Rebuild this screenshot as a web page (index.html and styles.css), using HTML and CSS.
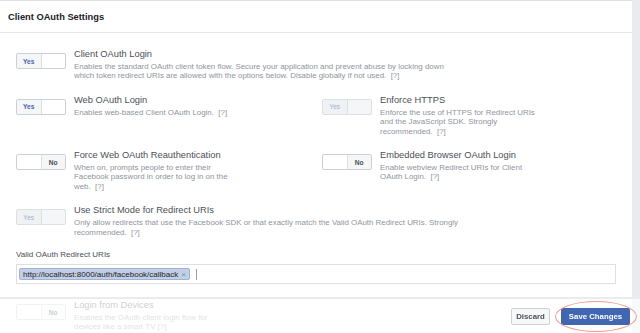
FILE: index.html
```html
<!DOCTYPE html>
<html>
<head>
<meta charset="utf-8">
<link rel="stylesheet" href="styles.css">
</head>
<body>
<div class="card">
  <div class="card-header">Client OAuth Settings</div>
  <div class="card-body">
    <div class="setting">
      <div class="toggle"><span class="yes active">Yes</span><span class="off"></span></div>
      <div class="text wide">
        <div class="title">Client OAuth Login</div>
        <div class="desc">Enables the standard OAuth client token flow. Secure your application and prevent abuse by locking down which token redirect URIs are allowed with the options below. Disable globally if not used.&nbsp; [?]</div>
      </div>
    </div>
    <div class="pair">
      <div class="setting">
        <div class="toggle"><span class="yes active">Yes</span><span class="off"></span></div>
        <div class="text">
          <div class="title">Web OAuth Login</div>
          <div class="desc">Enables web-based Client OAuth Login.&nbsp; [?]</div>
        </div>
      </div>
      <div class="setting">
        <div class="toggle disabled"><span class="yes active">Yes</span><span class="off"></span></div>
        <div class="text">
          <div class="title">Enforce HTTPS</div>
          <div class="desc">Enforce the use of HTTPS for Redirect URIs and the JavaScript SDK. Strongly recommended.&nbsp; [?]</div>
        </div>
      </div>
    </div>
    <div class="pair">
      <div class="setting">
        <div class="toggle"><span class="off"></span><span class="no active">No</span></div>
        <div class="text">
          <div class="title">Force Web OAuth Reauthentication</div>
          <div class="desc">When on, prompts people to enter their Facebook password in order to log in on the web.&nbsp; [?]</div>
        </div>
      </div>
      <div class="setting">
        <div class="toggle"><span class="off"></span><span class="no active">No</span></div>
        <div class="text">
          <div class="title">Embedded Browser OAuth Login</div>
          <div class="desc">Enable webview Redirect URIs for Client OAuth Login.&nbsp; [?]</div>
        </div>
      </div>
    </div>
    <div class="setting">
      <div class="toggle disabled"><span class="yes active">Yes</span><span class="off"></span></div>
      <div class="text wide">
        <div class="title">Use Strict Mode for Redirect URIs</div>
        <div class="desc">Only allow redirects that use the Facebook SDK or that exactly match the Valid OAuth Redirect URIs. Strongly recommended.&nbsp; [?]</div>
      </div>
    </div>
    <div class="field">
      <div class="field-label">Valid OAuth Redirect URIs</div>
      <div class="token-input">
        <span class="token">http://localhost:8000/auth/facebook/callback<span class="token-x">×</span></span>
        <span class="caret"></span>
      </div>
    </div>
    <div class="setting after-field">
      <div class="toggle"><span class="off"></span><span class="no active">No</span></div>
      <div class="text">
        <div class="title">Login from Devices</div>
        <div class="desc">Enables the OAuth client login flow for devices like a smart TV [?]</div>
      </div>
    </div>
  </div>
</div>
<div class="footer">
  <button class="btn btn-discard">Discard</button>
  <button class="btn btn-save">Save Changes</button>
  <div class="highlight"></div>
</div>
</body>
</html>
```
FILE: styles.css
```css
html, body {
  margin: 0;
  height: 333px;
  overflow: hidden;
}
body {
  background: #e9ebee;
  font-family: "Liberation Sans", Arial, sans-serif;
  color: #4b4f56;
}
.card {
  width: 632px;
  height: 333px;
  box-sizing: border-box;
  background: #fff;
  border-top: 1px solid #dddfe2;
  overflow: hidden;
}
.card-header {
  height: 31px;
  padding: 0 8px;
  display: flex;
  align-items: center;
  font-size: 9.3px;
  font-weight: bold;
  color: #1d2129;
  border-bottom: 1px solid #e5e6e9;
}
.card-body {
  padding: 15px 16px 0;
  display: flex;
  flex-direction: column;
  gap: 13px;
}
.pair {
  display: grid;
  grid-template-columns: 306px 306px;
}
.setting {
  display: flex;
  gap: 8px;
  align-items: flex-start;
}
.toggle {
  flex: none;
  display: flex;
  width: 50px;
  height: 16px;
  margin-top: 5px;
  box-sizing: border-box;
  border: 1px solid #ccd0d5;
  border-radius: 2px;
  overflow: hidden;
  background: #fff;
}
.toggle span {
  flex: 1;
  display: flex;
  align-items: center;
  justify-content: center;
  font-size: 6.6px;
  font-weight: bold;
}
.toggle .active {
  background: #f5f6f7;
}
.toggle .yes {
  color: #4267b2;
  border-right: 1px solid #dddfe2;
}
.toggle .no {
  color: #4b4f56;
  border-left: 1px solid #dddfe2;
}
.toggle.disabled {
  border-color: #dddfe2;
  background: #f5f6f7;
}
.toggle.disabled .yes {
  color: #9cb4d8;
  background: #f0f1f3;
  font-weight: normal;
}
.text {
  width: 160px;
}
.text.wide {
  width: 390px;
}
.title {
  font-size: 9.3px;
  line-height: 13px;
  margin-bottom: 1px;
  color: #4b4f56;
}
.desc {
  font-size: 7.9px;
  line-height: 9.4px;
  color: #90949c;
}
.field-label {
  font-size: 8px;
  line-height: 10px;
  color: #4b4f56;
  margin-bottom: 4px;
}
.token-input {
  width: 600px;
  height: 20px;
  box-sizing: border-box;
  border: 1px solid #dddfe2;
  padding: 0 2px;
  display: flex;
  align-items: center;
}
.token {
  display: flex;
  align-items: center;
  height: 12px;
  box-sizing: border-box;
  padding: 0 3px;
  background: #c3cfe5;
  border: 1px solid #9fb3d6;
  border-radius: 2px;
  font-size: 8px;
  color: #1d2129;
}
.token-x {
  margin-left: 3px;
  color: #7b88a0;
  font-size: 8px;
}
.caret {
  width: 1px;
  height: 11px;
  margin-left: 6px;
  background: #9a9ea6;
}
.after-field {
  margin-top: 2px;
}
.footer {
  position: fixed;
  left: 0;
  bottom: 0;
  width: 640px;
  height: 36px;
  box-sizing: border-box;
  border-top: 2px solid #e9ebee;
  background: rgba(255, 255, 255, 0.72);
  display: flex;
  justify-content: flex-end;
  align-items: center;
  gap: 11px;
  padding-right: 10px;
}
.btn {
  height: 17px;
  box-sizing: border-box;
  padding: 0;
  font-family: "Liberation Sans", Arial, sans-serif;
  font-size: 7.8px;
  font-weight: bold;
  border-radius: 2px;
  display: flex;
  align-items: center;
  justify-content: center;
}
.btn-discard {
  width: 39px;
  background: #f6f7f9;
  border: 1px solid #ced0d4;
  color: #4b4f56;
}
.btn-save {
  width: 69px;
  background: #4267b2;
  border: 1px solid #4267b2;
  color: #fff;
}
.highlight {
  position: absolute;
  left: 555px;
  top: 2px;
  width: 82px;
  height: 31px;
  box-sizing: border-box;
  border: 1px solid #f19c8c;
  border-radius: 50%;
  pointer-events: none;
}
```
